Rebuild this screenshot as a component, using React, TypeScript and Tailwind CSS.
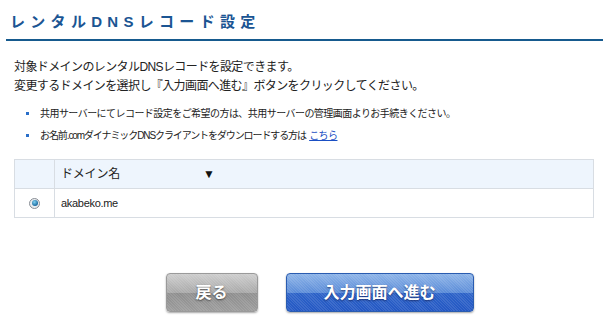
import React from 'react';

const font = { fontFamily: '"Liberation Sans", "Noto Sans CJK JP", sans-serif' };

const Bullet: React.FC<{ children: React.ReactNode }> = ({ children }) => (
  <li className="flex items-center h-[22px]">
    <span className="w-[3px] h-[3px] bg-[#2a6fc9] ml-[26px] mr-[11px] shrink-0" />
    <span className="text-[10px] tracking-[-0.55px] text-[#222]">{children}</span>
  </li>
);

const App: React.FC = () => {
  return (
    <div className="w-[609px] h-[323px] bg-white overflow-hidden" style={font}>
      <div className="mx-[6px] pt-[12px] h-[41px] border-b-2 border-[#165a8e]">
        <h1 className="pl-[4px] text-[15px] leading-[20px] font-bold tracking-[5.3px] text-[#1b5593]">
          レンタルDNSレコード設定
        </h1>
      </div>

      <div className="pl-[14px] pt-[17px] text-[12px] leading-[19px] tracking-[-0.6px] text-[#222]">
        <p>対象ドメインのレンタルDNSレコードを設定できます。</p>
        <p>変更するドメインを選択し『入力画面へ進む』ボタンをクリックしてください。</p>
      </div>

      <ul className="mt-[6px]">
        <Bullet>共用サーバーにてレコード設定をご希望の方は、共用サーバーの管理画面よりお手続きください。</Bullet>
        <Bullet>
          <span className="tracking-[-1.1px]">お名前.comダイナミックDNSクライアントをダウンロードする方は</span>{' '}
          <a className="text-[#1a4fc4] underline ml-[1px]">こちら</a>
        </Bullet>
      </ul>

      <table className="mt-[13px] ml-[14px] w-[580px] border-collapse border border-[#d8dde3] text-[11px] text-[#222]">
        <thead>
          <tr className="h-[29px] bg-[#eef5fd]">
            <th className="w-[40px] border-r border-[#d8dde3]" />
            <th className="text-left font-normal pl-[6px]">
              <span className="inline-block w-[142px] text-[12px] tracking-[-0.2px]">ドメイン名</span>
              <span className="text-[12px] text-[#111]">▼</span>
            </th>
          </tr>
        </thead>
        <tbody>
          <tr className="h-[29px] border-t border-[#d8dde3]">
            <td className="border-r border-[#d8dde3]">
              <span className="mx-auto flex items-center justify-center w-[11px] h-[11px] rounded-full border border-[#8a8f96] bg-[#e9ecef]">
                <span className="w-[6px] h-[6px] rounded-full bg-[radial-gradient(circle_at_40%_35%,#7fd0f0,#1a6aa0_70%)]" />
              </span>
            </td>
            <td className="pl-[6px] tracking-[-0.3px]">akabeko.me</td>
          </tr>
        </tbody>
      </table>

      <div className="flex justify-center gap-[28px] mt-[55px] pl-[30px]">
        <button className="w-[92px] h-[39px] rounded-[4px] border border-[#9a9a9a] shadow-[0_1px_2px_rgba(0,0,0,0.35)] bg-[repeating-linear-gradient(45deg,rgba(255,255,255,0.1)_0_1px,transparent_1px_2px),linear-gradient(to_bottom,#cdcdcd,#a9a9a9_50%,#8e8e8e_51%,#9c9c9c)] text-white font-bold text-[16px] [text-shadow:0_1px_2px_rgba(0,0,0,0.55)]">
          戻る
        </button>
        <button className="w-[188px] h-[39px] rounded-[4px] border border-[#2a5cb0] shadow-[0_1px_2px_rgba(0,0,0,0.35)] bg-[repeating-linear-gradient(45deg,rgba(255,255,255,0.1)_0_1px,transparent_1px_2px),linear-gradient(to_bottom,#8db4e8,#5b8cd8_50%,#2d63c8_51%,#2458c4)] text-white font-bold text-[16px] [text-shadow:0_1px_2px_rgba(0,0,40,0.55)]">
          入力画面へ進む
        </button>
      </div>
    </div>
  );
};

export default App;
